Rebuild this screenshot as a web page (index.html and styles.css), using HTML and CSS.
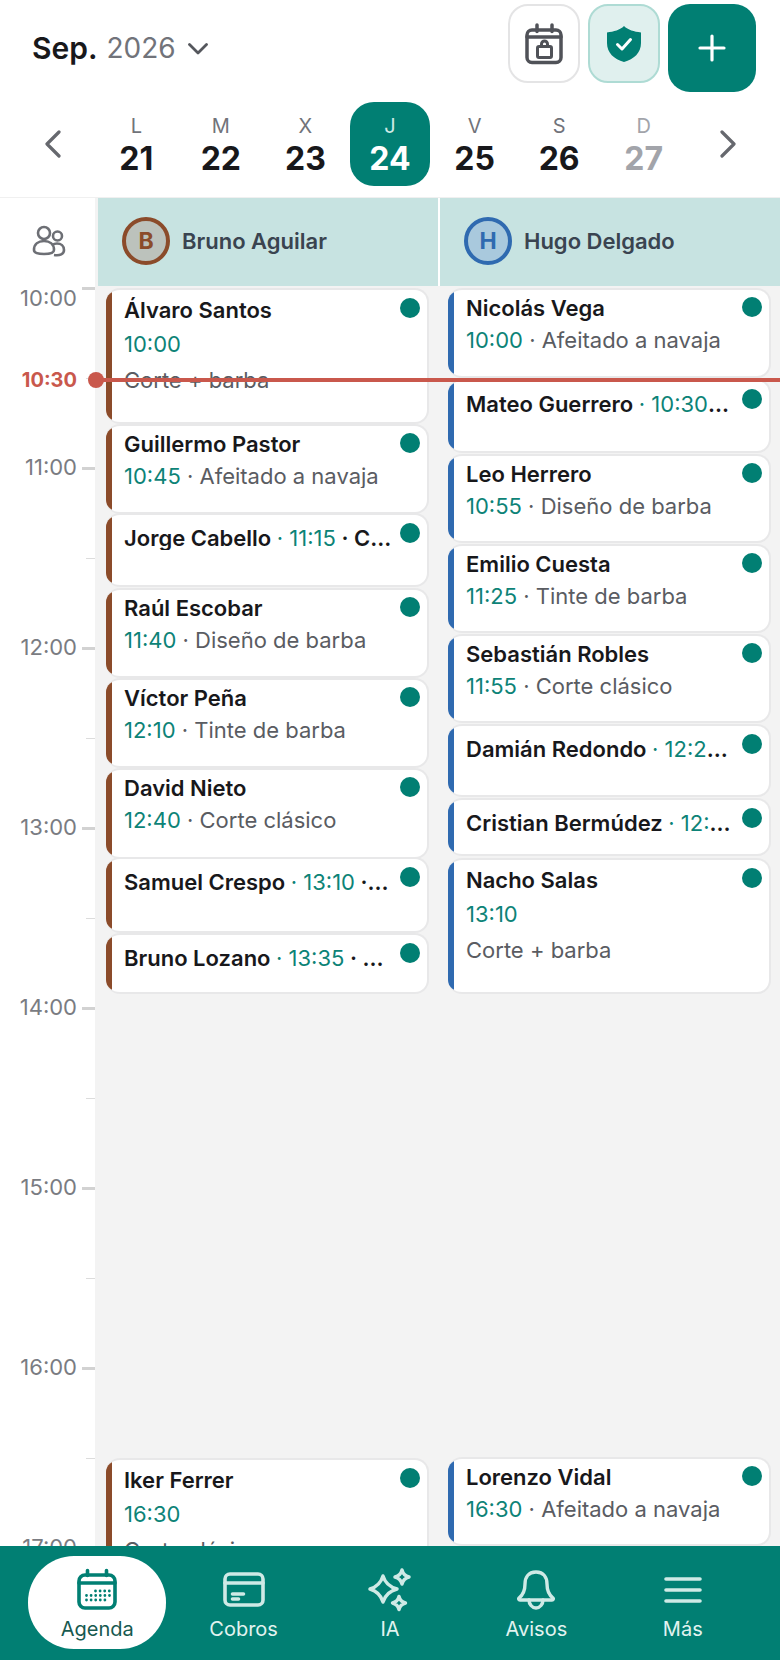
FILE: index.html
```html
<!DOCTYPE html>
<html lang="es">
<head>
<meta charset="utf-8">
<title>Agenda</title>
<link rel="stylesheet" href="styles.css">
</head>
<body>
<div class="app">
  <header class="top">
    <div class="toolbar">
      <button class="month">
        <span class="month-name">Sep.</span>
        <span class="month-year">2026</span>
        <svg class="month-chevron" width="20" height="12" viewBox="0 0 20 12"><path d="M1.5 1.5 10 10l8.5-8.5"/></svg>
      </button>
      <div class="actions">
        <button class="act act-plain">
          <svg width="40" height="42" viewBox="0 0 40 42" fill="none" stroke="#505258" stroke-width="3.5" stroke-linecap="round" stroke-linejoin="round"><rect x="3" y="7" width="34" height="32.500" rx="5"/><path d="M3 14h34M13 2v6.500M28 2v6.500"/><rect x="13.500" y="23.500" width="14" height="11" rx="1.500" stroke-width="3"/><path d="M17.500 23.500v-2.500a3 3 0 0 1 6 0v2.500" stroke-width="3"/></svg>
        </button>
        <button class="act act-soft">
          <svg width="36" height="38" viewBox="0 0 36 38"><path fill="#017f73" d="M18 1c4 4 10 5.500 17 6.500V18c0 10-7 16-17 19C8 34 1 28 1 18V7.500C8 6.500 14 5 18 1Z"/><path d="m11.500 19.500 4.500 4.500 8.500-9.500" fill="none" stroke="#fff" stroke-width="3" stroke-linecap="round" stroke-linejoin="round"/></svg>
        </button>
        <button class="act-add">
          <svg width="28" height="28" viewBox="0 0 28 28" fill="none" stroke="#fff" stroke-width="3.200" stroke-linecap="round"><path d="M14 2v24M2 14h24"/></svg>
        </button>
      </div>
    </div>
    <nav class="week">
      <button class="arrow"><svg width="17" height="28" viewBox="0 0 17 28"><path d="M15 2 3 14l12 12"/></svg></button>
      <div class="days">
        <div class="day"><span class="day-l">L</span><span class="day-n">21</span></div>
        <div class="day"><span class="day-l">M</span><span class="day-n">22</span></div>
        <div class="day"><span class="day-l">X</span><span class="day-n">23</span></div>
        <div class="day day-on"><span class="day-l">J</span><span class="day-n">24</span></div>
        <div class="day"><span class="day-l">V</span><span class="day-n">25</span></div>
        <div class="day"><span class="day-l">S</span><span class="day-n">26</span></div>
        <div class="day day-off"><span class="day-l">D</span><span class="day-n">27</span></div>
      </div>
      <button class="arrow"><svg width="17" height="28" viewBox="0 0 17 28"><path d="m2 2 12 12L2 26"/></svg></button>
    </nav>
  </header>

  <div class="resources">
    <div class="res-corner">
      <svg width="34" height="32" viewBox="0 0 34 32" fill="none" stroke="#6d6f75" stroke-width="2.600" stroke-linejoin="round"><circle cx="12" cy="8" r="6"/><circle cx="25.500" cy="11" r="4.500"/><path d="M2 25c0-6 4.500-9 10-9s10 3 10 9c0 3-4 4-10 4S2 28 2 25Z"/><path d="M22 30c6 1 10-1 10-5 0-4-3-6.500-7-6.500-2 0-3.500.5-5 1.500"/></svg>
    </div>
    <div class="res">
      <span class="avatar avatar-b">B</span><span class="res-name">Bruno Aguilar</span>
    </div>
    <div class="res">
      <span class="avatar avatar-h">H</span><span class="res-name">Hugo Delgado</span>
    </div>
  </div>

  <main class="sched">
    <div class="gutter">
      <div class="hour hour-first"><span class="hour-label">10:00</span></div>
      <div class="hour"><span class="hour-label">11:00</span></div>
      <div class="hour"><span class="hour-label">12:00</span></div>
      <div class="hour"><span class="hour-label">13:00</span></div>
      <div class="hour"><span class="hour-label">14:00</span></div>
      <div class="hour"><span class="hour-label">15:00</span></div>
      <div class="hour"><span class="hour-label">16:00</span></div>
      <div class="hour"><span class="hour-label">17:00</span></div>
    </div>

    <div class="col col-b">
      <article class="card three" style="top:2px;height:136px"><div class="name">Álvaro Santos</div><div class="time">10:00</div><div class="svc">Corte + barba</div><i class="dot"></i></article>
      <article class="card two" style="top:138px;height:90px"><div class="name">Guillermo Pastor</div><div class="sub"><span class="time">10:45</span> · <span class="svc">Afeitado a navaja</span></div><i class="dot"></i></article>
      <article class="card one" style="top:227px;height:74px"><div class="line">Jorge Cabello <span class="time">· 11:15</span> · Corte clásico</div><i class="dot"></i></article>
      <article class="card two" style="top:302px;height:90px"><div class="name">Raúl Escobar</div><div class="sub"><span class="time">11:40</span> · <span class="svc">Diseño de barba</span></div><i class="dot"></i></article>
      <article class="card two" style="top:392px;height:90px"><div class="name">Víctor Peña</div><div class="sub"><span class="time">12:10</span> · <span class="svc">Tinte de barba</span></div><i class="dot"></i></article>
      <article class="card two" style="top:482px;height:91px"><div class="name">David Nieto</div><div class="sub"><span class="time">12:40</span> · <span class="svc">Corte clásico</span></div><i class="dot"></i></article>
      <article class="card one" style="top:571px;height:76px"><div class="line">Samuel Crespo <span class="time">· 13:10</span> · Corte + barba</div><i class="dot"></i></article>
      <article class="card one" style="top:647px;height:61px"><div class="line">Bruno Lozano <span class="time">· 13:35</span> · Afeitado a navaja</div><i class="dot"></i></article>
      <article class="card three" style="top:1172px;height:136px"><div class="name">Iker Ferrer</div><div class="time">16:30</div><div class="svc">Corte clásico</div><i class="dot"></i></article>
    </div>

    <div class="col col-h">
      <article class="card two" style="top:2px;height:90px"><div class="name">Nicolás Vega</div><div class="sub"><span class="time">10:00</span> · <span class="svc">Afeitado a navaja</span></div><i class="dot"></i></article>
      <article class="card one" style="top:93px;height:74px"><div class="line">Mateo Guerrero <span class="time">· 10:30</span> · Corte clásico</div><i class="dot"></i></article>
      <article class="card two" style="top:168px;height:89px"><div class="name">Leo Herrero</div><div class="sub"><span class="time">10:55</span> · <span class="svc">Diseño de barba</span></div><i class="dot"></i></article>
      <article class="card two" style="top:258px;height:89px"><div class="name">Emilio Cuesta</div><div class="sub"><span class="time">11:25</span> · <span class="svc">Tinte de barba</span></div><i class="dot"></i></article>
      <article class="card two" style="top:348px;height:89px"><div class="name">Sebastián Robles</div><div class="sub"><span class="time">11:55</span> · <span class="svc">Corte clásico</span></div><i class="dot"></i></article>
      <article class="card one" style="top:438px;height:73px"><div class="line">Damián Redondo <span class="time">· 12:25</span> · Corte + barba</div><i class="dot"></i></article>
      <article class="card one" style="top:512px;height:58px"><div class="line">Cristian Bermúdez <span class="time">· 12:50</span> · Tinte de barba</div><i class="dot"></i></article>
      <article class="card three" style="top:572px;height:136px"><div class="name">Nacho Salas</div><div class="time">13:10</div><div class="svc">Corte + barba</div><i class="dot"></i></article>
      <article class="card two" style="top:1171px;height:89px"><div class="name">Lorenzo Vidal</div><div class="sub"><span class="time">16:30</span> · <span class="svc">Afeitado a navaja</span></div><i class="dot"></i></article>
    </div>

    <div class="now">
      <span class="now-label">10:30</span><i class="now-dot"></i><i class="now-line"></i>
    </div>
  </main>

  <footer class="tabs">
    <a class="tab tab-on">
      <svg width="44" height="44" viewBox="0 0 44 44" fill="none" stroke="#017f73" stroke-width="3.600" stroke-linecap="round" stroke-linejoin="round"><rect x="4" y="7" width="36" height="33" rx="6"/><path d="M4 15h36"/><path d="M12.500 2.500v5M31.500 2.500v5"/><g stroke-width="2.800" stroke-dasharray="0 4.600"><path d="M20.500 23H36"/><path d="M11.500 27.500H36"/><path d="M11.500 32H30"/></g></svg>
      <span>Agenda</span>
    </a>
    <a class="tab">
      <svg width="44" height="44" viewBox="0 0 44 44" fill="none" stroke="#cfeae6" stroke-width="3.600" stroke-linecap="round" stroke-linejoin="round"><rect x="3" y="6" width="38" height="31" rx="5"/><path d="M3 15h38"/><path d="M10.500 26h11M10.500 31h6"/></svg>
      <span>Cobros</span>
    </a>
    <a class="tab">
      <svg width="44" height="44" viewBox="0 0 44 44" fill="none" stroke="#cfeae6" stroke-width="3.400" stroke-linejoin="round"><path d="M15 8Q18 18 29 21Q18 24 15 34Q12 24 2 21Q12 18 15 8Z"/><path d="M34 2Q35.400 7.600 41 9Q35.400 10.400 34 16Q32.600 10.400 27 9Q32.600 7.600 34 2Z"/><path d="M31 28.500Q32.300 33.700 37.500 35Q32.300 36.300 31 41.500Q29.700 36.300 24.500 35Q29.700 33.700 31 28.500Z"/></svg>
      <span>IA</span>
    </a>
    <a class="tab">
      <svg width="44" height="44" viewBox="0 0 44 44" fill="none" stroke="#cfeae6" stroke-width="3.400" stroke-linecap="round" stroke-linejoin="round"><path d="M22 4c-8 0-11 6-11 12 0 7-2 11-6 14-.8.800-.3 2 1 2h32c1.300 0 1.800-1.200 1-2-4-3-6-7-6-14 0-6-3-12-11-12Z"/><path d="M15 32c0 4 3 8 7 8s7-4 7-8"/></svg>
      <span>Avisos</span>
    </a>
    <a class="tab">
      <svg width="44" height="44" viewBox="0 0 44 44" fill="none" stroke="#cfeae6" stroke-width="3.600" stroke-linecap="round"><path d="M5 11h34M5 22h34M5 33h34"/></svg>
      <span>Más</span>
    </a>
  </footer>
</div>
</body>
</html>
```

FILE: styles.css
```css
* { box-sizing: border-box; }
html, body { margin: 0; padding: 0; background: #fff; }
body { font-family: Inter, "Noto Sans", "Liberation Sans", sans-serif; color: #18181b; }
button { font: inherit; color: inherit; background: none; border: 0; padding: 0; }

.app { width: 780px; height: 1660px; display: flex; flex-direction: column; overflow: hidden; }

/* Header */
.top { flex: none; height: 198px; padding-top: 4px; border-bottom: 1px solid #f0f0f0; }
.toolbar { height: 88px; display: flex; align-items: center; justify-content: space-between; padding: 0 24px 0 32px; }
.month { display: flex; align-items: center; }
.month-name { font-size: 30px; font-weight: 600; color: #18181b; }
.month-year { font-size: 28px; color: #71737a; margin-left: 9px; }
.month-chevron { margin-left: 12px; margin-top: 2px; fill: none; stroke: #55575d; stroke-width: 2.800; stroke-linecap: round; stroke-linejoin: round; }
.actions { display: flex; align-items: flex-start; gap: 8px; height: 88px; }
.act { width: 72px; height: 79px; border-radius: 20px; display: flex; align-items: center; justify-content: center; }
.act-plain { background: #fff; border: 2px solid #e4e4e5; }
.act-soft { background: #e0f0ee; border: 2px solid #aedbd4; }
.act-add { width: 88px; height: 88px; border-radius: 22px; background: #017f73; display: flex; align-items: center; justify-content: center; }

.week { height: 84px; margin-top: 10px; display: flex; align-items: center; justify-content: space-between; padding: 0 32px; }
.arrow { width: 40px; height: 40px; display: flex; align-items: center; justify-content: center; }
.arrow svg { fill: none; stroke: #66686e; stroke-width: 3.200; stroke-linecap: round; stroke-linejoin: round; }
.days { width: 592px; display: grid; grid-template-columns: repeat(7, 1fr); }
.day { width: 80px; height: 84px; justify-self: center; padding-top: 12px; border-radius: 24px; display: flex; flex-direction: column; align-items: center; }
.day-l { font-size: 20px; line-height: 24px; color: #71737a; }
.day-n { font-size: 32px; line-height: 40px; font-weight: 700; margin-top: 1px; color: #18181b; }
.day-on { background: #017f73; }
.day-on .day-l { color: #cfeae6; }
.day-on .day-n { color: #fff; }
.day-off .day-l { color: #a2a4aa; }
.day-off .day-n { color: #a2a4aa; }

/* Resource header */
.resources { flex: none; height: 88px; display: flex; background: #fff; }
.res-corner { width: 98px; border-right: 3px solid #f3f3f3; display: flex; align-items: center; justify-content: center; padding-left: 3px; padding-bottom: 2px; }
.res { flex: 1; background: #c7e3e1; display: flex; align-items: center; gap: 12px; padding: 0 0 2px 24px; }
.res + .res { margin-left: 2px; }
.avatar { width: 48px; height: 48px; border-radius: 50%; border: 4px solid; display: flex; align-items: center; justify-content: center; font-size: 23px; font-weight: 700; }
.avatar-b { border-color: #8b4b2a; color: #8b4b2a; background: #bcc2bc; }
.avatar-h { border-color: #2f6ab0; color: #2f6ab0; background: #a9c9dd; }
.res-name { font-size: 22px; font-weight: 600; color: #3a4450; }

/* Schedule */
.sched { flex: 1; min-height: 0; position: relative; display: flex; gap: 3px; overflow: hidden; background: #f3f3f3; }
.gutter { width: 95px; padding-top: 2px; background: #fff; flex: none; }
.hour { height: 180px; position: relative; }
.hour::before { content: ""; position: absolute; right: 0; top: -1px; width: 13px; height: 3px; background: #d2d2d2; }
.hour::after { content: ""; position: absolute; right: 0; top: 90px; width: 9px; height: 1px; background: #dcdcdc; }
.hour-label { position: absolute; right: 18px; top: -13px; font-size: 22px; line-height: 24px; color: #7a7c82; }
.hour-first .hour-label { top: -2px; }

.col { flex: 1; position: relative; }
.card { position: absolute; left: 8px; right: 9px; background: #fff; border: 2px solid #e8e8e9; border-left: 0; border-radius: 14px; overflow: hidden; font-size: 22px; line-height: 24px; }
.col-h .card { left: 7.5px; }
.card::before { content: ""; position: absolute; left: 0; top: -2px; bottom: -2px; width: 6px; }
.col-b .card::before { background: #8b4b2a; }
.col-h .card::before { background: #2f6ab0; }
.dot { position: absolute; top: 8px; right: 7px; width: 20px; height: 20px; border-radius: 50%; background: #017f73; }
.name { font-weight: 600; color: #18181b; }
.time { color: #0d8377; font-weight: 400; }
.svc { color: #5a5c62; font-weight: 400; }
.sub { color: #5a5c62; white-space: nowrap; overflow: hidden; text-overflow: ellipsis; }
.line { font-weight: 600; white-space: nowrap; overflow: hidden; text-overflow: ellipsis; color: #18181b; }
.card.two { padding: 6px 36px 0 18px; }
.card.two .sub { margin-top: 8px; }
.card.two .dot { top: 7px; }
.card.one { padding: 11px 34px 0 18px; }
.col-h .card.one { padding-right: 37px; }
.card.three { padding: 8px 36px 0 18px; }
.card.three .time { margin-top: 10px; }
.card.three .svc { margin-top: 12px; }

.now { position: absolute; left: 0; right: 0; top: 92px; height: 4px; z-index: 3; }
.now-line { position: absolute; left: 96px; right: 0; top: 0; height: 4px; background: #c9584c; }
.now-dot { position: absolute; left: 88px; top: -6px; width: 16px; height: 16px; border-radius: 50%; background: #c9584c; }
.now-label { position: absolute; right: 703px; top: -10px; font-size: 20px; line-height: 24px; font-weight: 700; color: #c9584c; background: #fff; }

/* Bottom nav */
.tabs { flex: none; height: 114px; background: #017f73; display: grid; grid-template-columns: repeat(5, 1fr); padding: 10px 24px 11px; position: relative; z-index: 4; }
.tab { display: flex; flex-direction: column; align-items: center; padding-top: 12px; gap: 6px; color: #e2f3f0; font-size: 20px; line-height: 22px; font-weight: 400; }
.tab-on { justify-self: center; width: 138px; background: #fff; border-radius: 46px; color: #17594f; }
```
